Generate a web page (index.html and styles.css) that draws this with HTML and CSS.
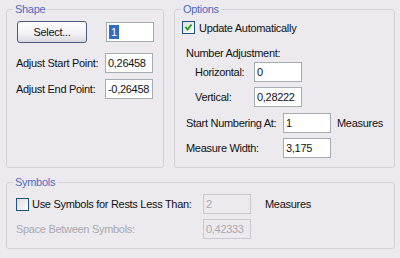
FILE: index.html
```html
<!DOCTYPE html>
<html lang="en">
<head>
    <meta charset="UTF-8">
    <title>Shape Options</title>
    <link rel="stylesheet" href="styles.css">
</head>
<body>
    <div class="dialog">
        <div class="top-row">
            <fieldset class="group shape">
                <legend>Shape</legend>
                <div class="body">
                    <div class="row tall">
                        <div class="btn">Select...</div>
                        <div class="field sel-field"><span class="selected">1</span></div>
                    </div>
                    <div class="row gap10">
                        <span class="label w89">Adjust Start Point:</span>
                        <div class="field">0,26458</div>
                    </div>
                    <div class="row gap6">
                        <span class="label w89">Adjust End Point:</span>
                        <div class="field">-0,26458</div>
                    </div>
                </div>
            </fieldset>

            <fieldset class="group options">
                <legend>Options</legend>
                <div class="body">
                    <div class="row short">
                        <div class="check checked">
                            <svg width="11" height="11" viewBox="0 0 11 11"><path d="M2.5 5 L4.5 7.5 L8.5 2.5" fill="none" stroke="#21A121" stroke-width="2"/></svg>
                        </div>
                        <span class="check-label">Update Automatically</span>
                    </div>
                    <div class="row short gap12">
                        <span class="label indent4">Number Adjustment:</span>
                    </div>
                    <div class="row gap3">
                        <span class="label indent13 w59">Horizontal:</span>
                        <div class="field">0</div>
                    </div>
                    <div class="row gap5">
                        <span class="label indent13 w59">Vertical:</span>
                        <div class="field">0,28222</div>
                    </div>
                    <div class="row gap6">
                        <span class="label indent4 w97">Start Numbering At:</span>
                        <div class="field">1</div>
                        <span class="unit">Measures</span>
                    </div>
                    <div class="row gap5">
                        <span class="label indent4 w97">Measure Width:</span>
                        <div class="field">3,175</div>
                    </div>
                </div>
            </fieldset>
        </div>

        <fieldset class="group symbols">
            <legend>Symbols</legend>
            <div class="body">
                <div class="row">
                    <div class="label w187 check-wrap">
                        <div class="check"></div>
                        <span class="check-label">Use Symbols for Rests Less Than:</span>
                    </div>
                    <div class="field disabled">2</div>
                    <span class="unit wide">Measures</span>
                </div>
                <div class="row gap5">
                    <span class="label w187 muted">Space Between Symbols:</span>
                    <div class="field disabled">0,42333</div>
                </div>
            </div>
        </fieldset>
    </div>
</body>
</html>
```

FILE: styles.css
```css
body {
    margin: 0;
    background: #ECEAEE;
    font-family: "Liberation Sans", Arial, sans-serif;
    font-size: 11px;
    letter-spacing: -0.3px;
    color: #111;
}
.dialog {
    padding: 3px 0 0 6px;
    width: 389px;
}
.top-row {
    display: flex;
    gap: 10px;
}
.group {
    margin: 0;
    padding: 0;
    min-width: 0;
    box-sizing: border-box;
    border: 1px solid #D3D1D8;
    border-radius: 3px;
}
.group legend {
    padding: 0 2px;
    margin-left: 6px;
    line-height: 13px;
    color: #4D6BC2;
}
.shape { width: 158px; }
.options { width: 221px; }
.symbols {
    width: 389px;
    margin-top: 8px;
}
.shape .body { padding: 5px 0 0 9px; }
.options .body { padding: 5px 0 9px 7px; }
.symbols .body { padding: 5px 0 9px 9px; }

.row {
    display: flex;
    align-items: center;
    height: 20px;
}
.row.tall { height: 22px; }
.row.short { height: 13px; }
.gap3 { margin-top: 3px; }
.gap5 { margin-top: 5px; }
.gap6 { margin-top: 6px; }
.gap10 { margin-top: 10px; }
.gap12 { margin-top: 12px; }

.label { white-space: nowrap; flex-shrink: 0; }
.w59 { width: 59px; }
.w89 { width: 89px; }
.w97 { width: 97px; }
.w187 { width: 187px; }
.indent4 { margin-left: 4px; }
.indent13 { margin-left: 13px; }

.field {
    width: 48px;
    height: 20px;
    box-sizing: border-box;
    border: 1px solid #A5ACB2;
    background: #fff;
    padding: 0 2px;
    line-height: 18px;
    white-space: nowrap;
    overflow: hidden;
}
.field.disabled {
    background: #ECEAEE;
    border-color: #C9C8CE;
    color: #A9A8AE;
}
.sel-field { margin-left: 19px; }
.selected {
    background: #316AC5;
    color: #fff;
    padding: 0 2px;
    display: inline-block;
    line-height: 14px;
}
.unit { margin-left: 6px; }
.unit.wide { margin-left: 14px; }
.muted { color: #A9A8AE; }

.btn {
    width: 70px;
    height: 22px;
    margin-left: 1px;
    box-sizing: border-box;
    border: 1px solid #4B5A78;
    border-radius: 3px;
    background: linear-gradient(#FFFFFF, #F1F1F5 60%, #D8D8E2);
    text-align: center;
    line-height: 20px;
}

.check-wrap {
    display: flex;
    align-items: center;
}
.check {
    width: 13px;
    height: 13px;
    box-sizing: border-box;
    border: 1px solid #1C5180;
    background: linear-gradient(135deg, #DCDCD7, #FFFFFF);
    flex-shrink: 0;
}
.check svg { display: block; }
.check-label { margin-left: 4px; }
.symbols .check-label { margin-left: 3px; }
```
